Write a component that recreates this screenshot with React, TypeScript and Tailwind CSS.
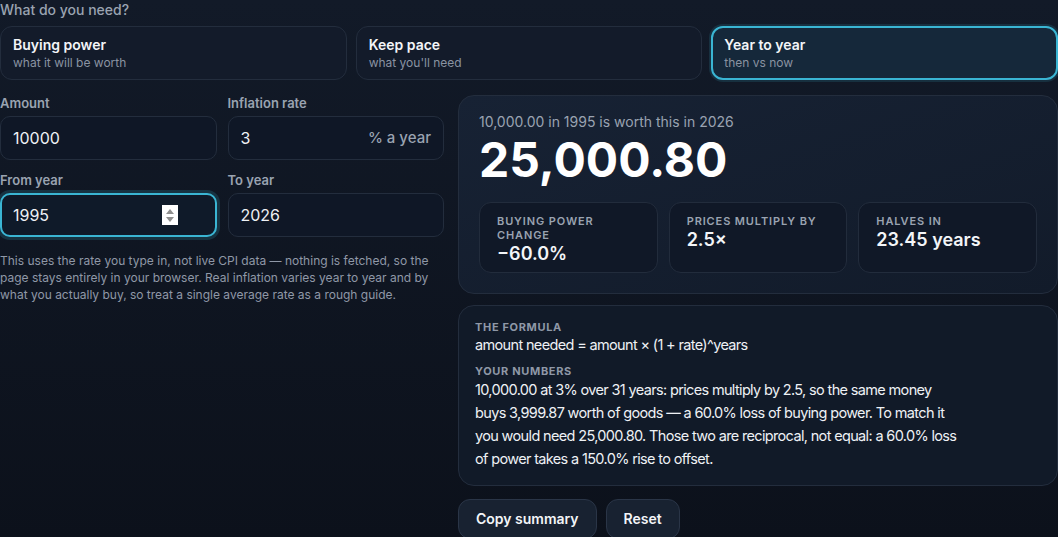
import { useState } from 'react';

type Mode = 'power' | 'pace' | 'yoy';

const modes: { id: Mode; title: string; sub: string }[] = [
  { id: 'power', title: 'Buying power', sub: 'what it will be worth' },
  { id: 'pace', title: 'Keep pace', sub: "what you'll need" },
  { id: 'yoy', title: 'Year to year', sub: 'then vs now' },
];

function Field({
  label,
  value,
  suffix,
  focused,
  spinner,
}: {
  label: string;
  value: string;
  suffix?: string;
  focused?: boolean;
  spinner?: boolean;
}) {
  return (
    <label className="flex flex-col">
      <span className="text-[13px] leading-4 font-semibold text-[#9aa3b1] mb-[5px]">{label}</span>
      <div
        className={
          focused
            ? 'relative flex h-11 items-center rounded-[10px] border-2 border-[#3ab5d3] bg-[#0f1a29] px-[11px] shadow-[0_0_0_3px_rgba(58,181,211,0.18)]'
            : 'relative flex h-11 items-center rounded-[10px] border border-[#232d3d] bg-[#0f1726] px-3'
        }
      >
        <input
          readOnly
          value={value}
          className="w-full bg-transparent text-base text-[#eef1f5] outline-none"
        />
        {suffix && <span className="shrink-0 text-[15px] font-medium text-[#9aa3b1]">{suffix}</span>}
        {spinner && (
          <span className="absolute right-[37px] top-1/2 flex h-5 w-4 -translate-y-1/2 flex-col items-center justify-center gap-[3px] bg-white">
            <svg width="8" height="5" viewBox="0 0 8 5">
              <path d="M4 0L8 5H0z" fill="#8f8f8f" />
            </svg>
            <svg width="8" height="5" viewBox="0 0 8 5">
              <path d="M0 0h8L4 5z" fill="#8f8f8f" />
            </svg>
          </span>
        )}
      </div>
    </label>
  );
}

function Stat({ label, value }: { label: string; value: string }) {
  return (
    <div className="rounded-xl border border-[#222c3c] bg-[#101827] px-[17px] pt-[11px] pb-[6px]">
      <div className="text-[11px] leading-[14px] font-semibold uppercase tracking-[0.08em] text-[#9aa3b1]">{label}</div>
      <div className="text-lg leading-6 font-semibold text-[#f3f5f8]">{value}</div>
    </div>
  );
}

export default function App() {
  const [mode, setMode] = useState<Mode>('yoy');

  return (
    <div
      className="min-h-screen bg-gradient-to-b from-[#121a28] to-[#0c111b] text-white"
      style={{ fontFamily: 'Inter, "Noto Sans", sans-serif' }}
    >
      <p className="text-sm leading-5 font-medium text-[#9aa3b1] mb-1.5">What do you need?</p>

      {/* mode picker */}
      <div className="grid grid-cols-3 gap-[9px]">
        {modes.map((m) => (
          <button
            key={m.id}
            onClick={() => setMode(m.id)}
            className={
              mode === m.id
                ? 'rounded-xl border-2 border-[#3ab5d3] bg-[#15283a] px-[11px] py-[7px] text-left shadow-[0_0_0_2px_rgba(58,181,211,0.15)]'
                : 'rounded-xl border border-[#232d3d] bg-[#131b2a] px-3 py-2 text-left'
            }
          >
            <div className="text-sm leading-5 font-semibold text-[#f3f5f8]">{m.title}</div>
            <div className="text-xs leading-4 text-[#8a93a2]">{m.sub}</div>
          </button>
        ))}
      </div>

      <div className="mt-[15px] grid grid-cols-[444px_1fr] gap-[14px]">
        {/* inputs */}
        <div>
          <div className="grid grid-cols-2 gap-x-[11px] gap-y-3">
            <Field label="Amount" value="10000" />
            <Field label="Inflation rate" value="3" suffix="% a year" />
            <Field label="From year" value="1995" focused spinner />
            <Field label="To year" value="2026" />
          </div>
          <p className="mt-[15px] text-xs leading-[17px] text-[#8f98a7]">
            This uses the rate you type in, not live CPI data — nothing is fetched, so the page stays entirely in your
            browser. Real inflation varies year to year and by what you actually buy, so treat a single average rate as
            a rough guide.
          </p>
        </div>

        {/* results */}
        <div>
          <div className="rounded-2xl border border-[#232d3d] bg-gradient-to-br from-[#172234] to-[#121b2a] px-5 pt-4 pb-5">
            <p className="text-sm leading-5 text-[#9aa3b1]">10,000.00 in 1995 is worth this in 2026</p>
            <p className="mt-1 text-5xl leading-none font-bold text-white">25,000.80</p>
            <div className="mt-[18px] grid grid-cols-3 gap-[11px]">
              <Stat label="Buying power change" value="−60.0%" />
              <Stat label="Prices multiply by" value="2.5×" />
              <Stat label="Halves in" value="23.45 years" />
            </div>
          </div>

          <div className="mt-[11px] rounded-2xl border border-[#232d3d] bg-[#111a28] px-4 pt-[14px] pb-[15px]">
            <div className="text-[11px] leading-[14px] font-bold uppercase tracking-[0.06em] text-[#8f98a7]">The formula</div>
            <div className="text-[14.5px] leading-[22px] tracking-[-0.045em] text-[#eef1f5]">
              amount needed = amount × (1 + rate)^years
            </div>
            <div className="mt-2 text-[11px] leading-[14px] font-bold uppercase tracking-[0.06em] text-[#8f98a7]">Your numbers</div>
            <p className="max-w-[488px] text-[14.5px] leading-[23px] tracking-[-0.045em] text-[#eef1f5]">
              10,000.00 at 3% over 31 years: prices multiply by 2.5, so the same money buys 3,999.87 worth of goods — a
              60.0% loss of buying power. To match it you would need 25,000.80. Those two are reciprocal, not equal: a
              60.0% loss of power takes a 150.0% rise to offset.
            </p>
          </div>

          <div className="mt-[13px] flex gap-[9px]">
            <button className="h-10 rounded-xl border border-[#2a3547] bg-[#182231] px-[17px] text-sm font-semibold text-[#f3f5f8]">
              Copy summary
            </button>
            <button className="h-10 rounded-xl border border-[#2a3547] bg-[#182231] px-[17px] text-sm font-semibold text-[#f3f5f8]">
              Reset
            </button>
          </div>
        </div>
      </div>
    </div>
  );
}
